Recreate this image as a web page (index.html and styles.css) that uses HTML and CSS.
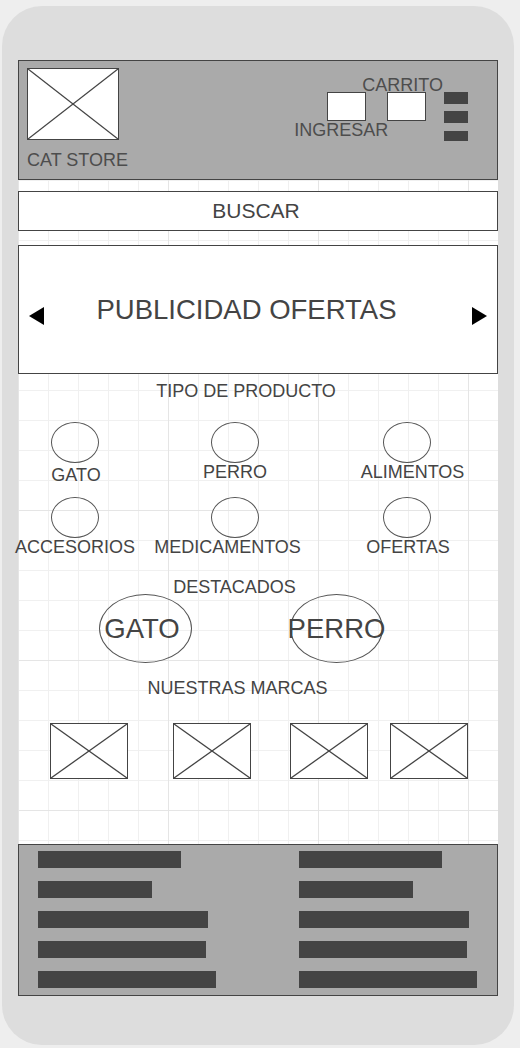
FILE: index.html
```html
<!DOCTYPE html>
<html lang="es">
<head>
<meta charset="utf-8">
<title>Cat Store</title>
<link rel="stylesheet" href="styles.css">
</head>
<body>
<div class="phone">
  <div class="screen">
    <header class="topbar">
      <div class="brand">
        <div class="ph logo">
          <svg class="ph-x" viewBox="0 0 90 70" preserveAspectRatio="none"><line x1="0" y1="0" x2="90" y2="70"/><line x1="90" y1="0" x2="0" y2="70"/></svg>
        </div>
        <div class="brand-name">CAT STORE</div>
      </div>
      <nav class="nav">
        <div class="acct">
          <div class="nav-box acct-box"></div>
          <span class="nav-label">INGRESAR</span>
        </div>
        <div class="cart">
          <span class="nav-label">CARRITO</span>
          <div class="nav-box cart-box"></div>
        </div>
        <div class="menu"><span></span><span></span><span></span></div>
      </nav>
    </header>

    <div class="search">BUSCAR</div>

    <div class="banner">
      <svg class="arrow" viewBox="0 0 15 18"><polygon points="15,0 15,18 0,9"/></svg>
      <div class="banner-text">PUBLICIDAD OFERTAS</div>
      <svg class="arrow" viewBox="0 0 15 18"><polygon points="0,0 15,9 0,18"/></svg>
    </div>

    <h2 class="section-title title-tipo">TIPO DE PRODUCTO</h2>

    <div class="categories">
      <div class="cat"><div class="cat-icon"></div><span class="cat-label low">GATO</span></div>
      <div class="cat"><div class="cat-icon"></div><span class="cat-label">PERRO</span></div>
      <div class="cat"><div class="cat-icon shift-l"></div><span class="cat-label nudge-r">ALIMENTOS</span></div>
      <div class="cat"><div class="cat-icon"></div><span class="cat-label">ACCESORIOS</span></div>
      <div class="cat"><div class="cat-icon"></div><span class="cat-label nudge-l">MEDICAMENTOS</span></div>
      <div class="cat"><div class="cat-icon shift-l"></div><span class="cat-label">OFERTAS</span></div>
    </div>

    <h2 class="section-title title-dest">DESTACADOS</h2>

    <div class="featured">
      <div class="feat feat-gato">GATO</div>
      <div class="feat">PERRO</div>
    </div>

    <h2 class="section-title title-marcas">NUESTRAS MARCAS</h2>

    <div class="brands">
      <div class="ph brand-logo"><svg class="ph-x" viewBox="0 0 76 54" preserveAspectRatio="none"><line x1="0" y1="0" x2="76" y2="54"/><line x1="76" y1="0" x2="0" y2="54"/></svg></div>
      <div class="ph brand-logo b2"><svg class="ph-x" viewBox="0 0 76 54" preserveAspectRatio="none"><line x1="0" y1="0" x2="76" y2="54"/><line x1="76" y1="0" x2="0" y2="54"/></svg></div>
      <div class="ph brand-logo b3"><svg class="ph-x" viewBox="0 0 76 54" preserveAspectRatio="none"><line x1="0" y1="0" x2="76" y2="54"/><line x1="76" y1="0" x2="0" y2="54"/></svg></div>
      <div class="ph brand-logo b4"><svg class="ph-x" viewBox="0 0 76 54" preserveAspectRatio="none"><line x1="0" y1="0" x2="76" y2="54"/><line x1="76" y1="0" x2="0" y2="54"/></svg></div>
    </div>
  </div>

  <footer class="footer">
    <div class="foot-col">
      <span class="bar" style="width:143px"></span>
      <span class="bar" style="width:114px"></span>
      <span class="bar" style="width:170px"></span>
      <span class="bar" style="width:168px"></span>
      <span class="bar" style="width:178px"></span>
    </div>
    <div class="foot-col">
      <span class="bar" style="width:143px"></span>
      <span class="bar" style="width:114px"></span>
      <span class="bar" style="width:170px"></span>
      <span class="bar" style="width:168px"></span>
      <span class="bar" style="width:178px"></span>
    </div>
  </footer>
</div>
</body>
</html>
```

FILE: styles.css
```css
* { box-sizing: border-box; }

html, body {
  margin: 0;
  padding: 0;
}

body {
  background: #eeeeee;
  font-family: "Liberation Sans", Arial, sans-serif;
  color: #444;
  width: 520px;
  height: 1048px;
  overflow: hidden;
}

.phone {
  margin: 6px 0 0 2px;
  width: 512px;
  height: 1039px;
  background: #dddddd;
  border-radius: 40px;
  padding: 54px 16px 49px 16px;
}

.screen {
  width: 480px;
  height: 784px;
  background-color: #fff;
  background-image:
    linear-gradient(to right, #e5e5e5 1px, transparent 1px),
    linear-gradient(to bottom, #e5e5e5 1px, transparent 1px),
    linear-gradient(to right, #f0f0f0 1px, transparent 1px),
    linear-gradient(to bottom, #f0f0f0 1px, transparent 1px);
  background-size: 150px 150px, 150px 150px, 30px 30px, 30px 30px;
}

/* placeholders */
.ph {
  background: #fff;
  border: 1px solid #444;
}
.ph-x {
  display: block;
  width: 100%;
  height: 100%;
}
.ph-x line {
  stroke: #444;
  stroke-width: 1.3;
}

/* header */
.topbar {
  height: 120px;
  background: #aaaaaa;
  border: 1px solid #444;
  display: flex;
  justify-content: space-between;
  align-items: flex-start;
  padding: 7px 29px 0 8px;
}

.logo {
  width: 92px;
  height: 72px;
}

.brand-name {
  margin-top: 11px;
  font-size: 18px;
  line-height: 18px;
  color: #4d4d4d;
}

.nav {
  display: flex;
  align-items: flex-start;
  margin-top: 8px;
}

.nav-label {
  display: block;
  font-size: 18px;
  line-height: 18px;
  color: #4d4d4d;
  white-space: nowrap;
}

.nav-box {
  width: 39px;
  height: 29px;
  background: #fff;
  border: 1px solid #444;
}

.acct {
  display: flex;
  flex-direction: column;
  align-items: flex-start;
  margin-top: 16px;
}
.acct-box { margin-left: 33px; }

.cart {
  display: flex;
  flex-direction: column;
  align-items: flex-start;
  margin-left: -26px;
}
.cart-box {
  margin-left: 25px;
  margin-top: -2px;
}

.menu {
  margin-left: 1px;
  margin-top: 16px;
  display: flex;
  flex-direction: column;
}
.menu span {
  display: block;
  width: 24px;
  height: 12px;
  background: #444;
}
.menu span:nth-child(2) { margin-top: 7px; }
.menu span:nth-child(3) { margin-top: 8px; height: 10px; }

/* search */
.search {
  margin-top: 11px;
  height: 40px;
  background: #fff;
  border: 1px solid #444;
  text-align: center;
  font-size: 21px;
  line-height: 38px;
  padding-right: 4px;
}

/* banner */
.banner {
  margin-top: 14px;
  height: 129px;
  background: #fff;
  border: 1px solid #444;
  display: flex;
  align-items: center;
  padding: 0 10px;
}
.arrow {
  width: 15px;
  height: 18px;
  flex: none;
  margin-top: 13px;
  fill: #000;
}
.banner-text {
  flex: 1;
  text-align: center;
  padding-right: 23px;
  font-size: 27.5px;
  white-space: nowrap;
}

/* section titles */
.section-title {
  margin: 0;
  font-weight: normal;
  font-size: 18px;
  line-height: 18px;
  text-align: center;
  white-space: nowrap;
}
.title-tipo { margin-top: 8px; padding-right: 24px; }
.title-dest { margin-top: 22px; padding-right: 47px; }
.title-marcas { margin-top: 16px; padding-right: 41px; }

/* categories */
.categories {
  margin-top: 22px;
  display: grid;
  grid-template-columns: 114px 206px 140px;
  row-gap: 16px;
}
.cat {
  display: flex;
  flex-direction: column;
  align-items: center;
}
.cat-icon {
  width: 48px;
  height: 41px;
  border: 1px solid #555;
  border-radius: 50%;
}
.cat-icon.shift-l { margin-right: 3px; }
.cat-label {
  display: block;
  font-size: 18px;
  line-height: 18px;
  white-space: nowrap;
}
.cat-label.low { margin-top: 3px; margin-bottom: -3px; margin-left: 2px; }
.cat-label.nudge-r { margin-left: 9px; }
.cat-label.nudge-l { margin-right: 15px; }

/* featured */
.featured {
  margin-top: -2px;
  display: flex;
  padding-left: 81px;
  gap: 98px;
}
.feat {
  width: 93px;
  height: 69px;
  border: 1px solid #555;
  border-radius: 50%;
  display: flex;
  align-items: center;
  justify-content: center;
  font-size: 27.5px;
  white-space: nowrap;
}
.feat-gato { padding-right: 7px; }

/* brands */
.brands {
  margin-top: 26px;
  display: flex;
  padding-left: 32px;
}
.brand-logo {
  width: 78px;
  height: 56px;
  flex: none;
}
.brand-logo.b2 { margin-left: 45px; }
.brand-logo.b3 { margin-left: 39px; }
.brand-logo.b4 { margin-left: 22px; }

/* footer */
.footer {
  height: 152px;
  background: #aaaaaa;
  border: 1px solid #444;
  display: grid;
  grid-template-columns: 261px 1fr;
  padding: 6px 0 7px 19px;
}
.foot-col {
  display: flex;
  flex-direction: column;
  gap: 13px;
}
.bar {
  display: block;
  height: 17px;
  background: #444;
}
```
